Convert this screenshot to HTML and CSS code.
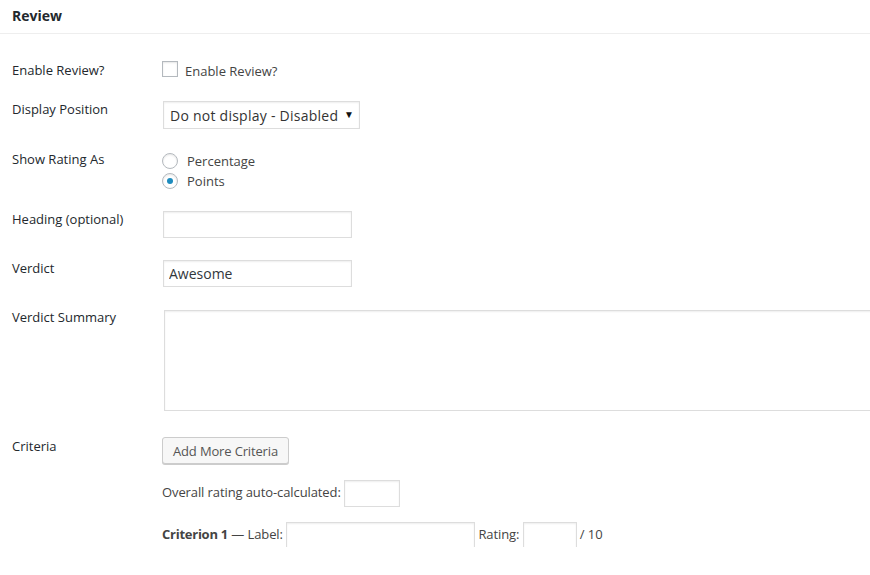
FILE: index.html
```html
<!DOCTYPE html>
<html>
<head>
<meta charset="utf-8">
<title>Review</title>
<link rel="stylesheet" href="styles.css">
</head>
<body>
<div class="box">
  <h2 class="box-title">Review</h2>
  <div class="form">
    <div class="row row-check">
      <div class="label">Enable Review?</div>
      <div class="field check-field">
        <span class="checkbox"></span>
        <span class="check-text">Enable Review?</span>
      </div>
    </div>
    <div class="row">
      <div class="label lift">Display Position</div>
      <div class="field">
        <div class="select-wrap">
          <select class="select"><option>Do not display - Disabled</option></select>
          <span class="select-arrow">&#9660;</span>
        </div>
      </div>
    </div>
    <div class="row">
      <div class="label lift">Show Rating As</div>
      <div class="field radios">
        <label class="radio-line"><span class="radio"></span><span>Percentage</span></label>
        <label class="radio-line"><span class="radio checked"></span><span>Points</span></label>
      </div>
    </div>
    <div class="row">
      <div class="label lift">Heading (optional)</div>
      <div class="field"><input class="text wide" type="text" value=""></div>
    </div>
    <div class="row row-verdict">
      <div class="label lift">Verdict</div>
      <div class="field"><input class="text wide" type="text" value="Awesome"></div>
    </div>
    <div class="row row-summary">
      <div class="label lift2">Verdict Summary</div>
      <div class="field"><textarea class="area"></textarea></div>
    </div>
    <div class="row">
      <div class="label">Criteria</div>
      <div class="field criteria">
        <button class="button" type="button">Add More Criteria</button>
        <div class="inline-line">Overall rating auto-calculated: <input class="text small" type="text"></div>
        <div class="inline-line crit"><strong>Criterion 1</strong> — Label: <input class="text label-input" type="text"> Rating: <input class="text rating" type="text"> / 10</div>
      </div>
    </div>
  </div>
</div>
</body>
</html>
```

FILE: styles.css
```css
html, body {
  margin: 0;
  padding: 0;
  background: #fff;
  overflow: hidden;
}
body {
  font-family: "Open Sans", "Liberation Sans", sans-serif;
  font-size: 13px;
  line-height: 18px;
  color: #444;
}
.box-title {
  margin: 0;
  padding: 7px 12px 8px;
  font-size: 14px;
  line-height: 18px;
  font-weight: 700;
  color: #23282d;
  border-bottom: 1px solid #eee;
}
.form {
  padding: 27px 0 0 12px;
  display: flex;
  flex-direction: column;
  gap: 22px;
}
.row {
  display: flex;
  align-items: flex-start;
}
.label {
  width: 150px;
  flex: none;
  color: #23282d;
  line-height: 18px;
}
.label.lift {
  margin-top: -1px;
}
.label.lift2 {
  margin-top: -2px;
}
.field {
  flex: 1;
  min-width: 0;
}
.check-field {
  display: flex;
  align-items: flex-start;
  height: 18px;
}
.checkbox {
  width: 14px;
  height: 14px;
  border: 1px solid #b4b9be;
  background: #fff;
  box-shadow: inset 0 1px 2px rgba(0,0,0,.1);
  flex: none;
}
.check-text {
  margin-left: 7px;
  margin-top: 1px;
}
.select-wrap {
  position: relative;
  display: inline-block;
  margin-left: 1px;
}
.select {
  -webkit-appearance: none;
  appearance: none;
  width: 197px;
  height: 28px;
  border: 1px solid #ddd;
  background: #fff;
  box-shadow: inset 0 1px 2px rgba(0,0,0,.07);
  font-family: "Open Sans", "Liberation Sans", sans-serif;
  font-size: 14px;
  letter-spacing: 0.25px;
  color: #333;
  padding: 0 0 0 6px;
  margin: 0;
  border-radius: 0;
  display: block;
}
.select-arrow {
  position: absolute;
  right: 6px;
  top: 8px;
  font-size: 10px;
  line-height: 10px;
  color: #111;
  pointer-events: none;
}
.radios {
  padding-top: 2px;
  display: flex;
  flex-direction: column;
  gap: 4px;
}
.radio-line {
  display: flex;
  align-items: center;
  height: 16px;
}
.radio-line span:last-child {
  margin-left: 9px;
}
.radio {
  width: 14px;
  height: 14px;
  border: 1px solid #b4b9be;
  border-radius: 50%;
  background: #fff;
  box-shadow: inset 0 1px 2px rgba(0,0,0,.1);
  flex: none;
  position: relative;
}
.radio.checked::after {
  content: "";
  position: absolute;
  left: 4px;
  top: 4px;
  width: 6px;
  height: 6px;
  border-radius: 50%;
  background: #1e8cbe;
}
.text {
  box-sizing: border-box;
  height: 27px;
  border: 1px solid #ddd;
  background: #fff;
  box-shadow: inset 0 1px 2px rgba(0,0,0,.07);
  font-family: "Open Sans", "Liberation Sans", sans-serif;
  font-size: 14px;
  color: #32373c;
  padding: 2px 5px;
  margin: 0;
  border-radius: 0;
  vertical-align: middle;
}
.wide {
  width: 189px;
  margin-left: 1px;
  display: block;
}
.row-summary {
  margin-top: 1px;
}
.area {
  display: block;
  box-sizing: border-box;
  width: 730px;
  height: 101px;
  margin: 0 0 4px 2px;
  border: 1px solid #ddd;
  box-shadow: inset 0 1px 2px rgba(0,0,0,.07);
  resize: none;
  padding: 4px;
}
.criteria {
  display: flex;
  flex-direction: column;
  align-items: flex-start;
  gap: 14px;
}
.button {
  box-sizing: border-box;
  height: 27px;
  padding: 1px 10px 0;
  border: 1px solid #ccc;
  border-radius: 3px;
  background: #f7f7f7;
  box-shadow: 0 1px 0 #ccc;
  font-family: "Open Sans", "Liberation Sans", sans-serif;
  font-size: 13px;
  letter-spacing: -0.15px;
  color: #555;
  line-height: 24px;
  margin: 0 0 1px 0;
}
.inline-line {
  height: 27px;
  line-height: 27px;
  white-space: nowrap;
  color: #444;
  letter-spacing: -0.1px;
}
.inline-line.crit {
  line-height: 29px;
}
.inline-line strong {
  font-weight: 700;
  color: #444;
  letter-spacing: -0.25px;
}
.small {
  width: 56px;
}
.label-input {
  width: 189px;
}
.rating {
  width: 54px;
}
```
